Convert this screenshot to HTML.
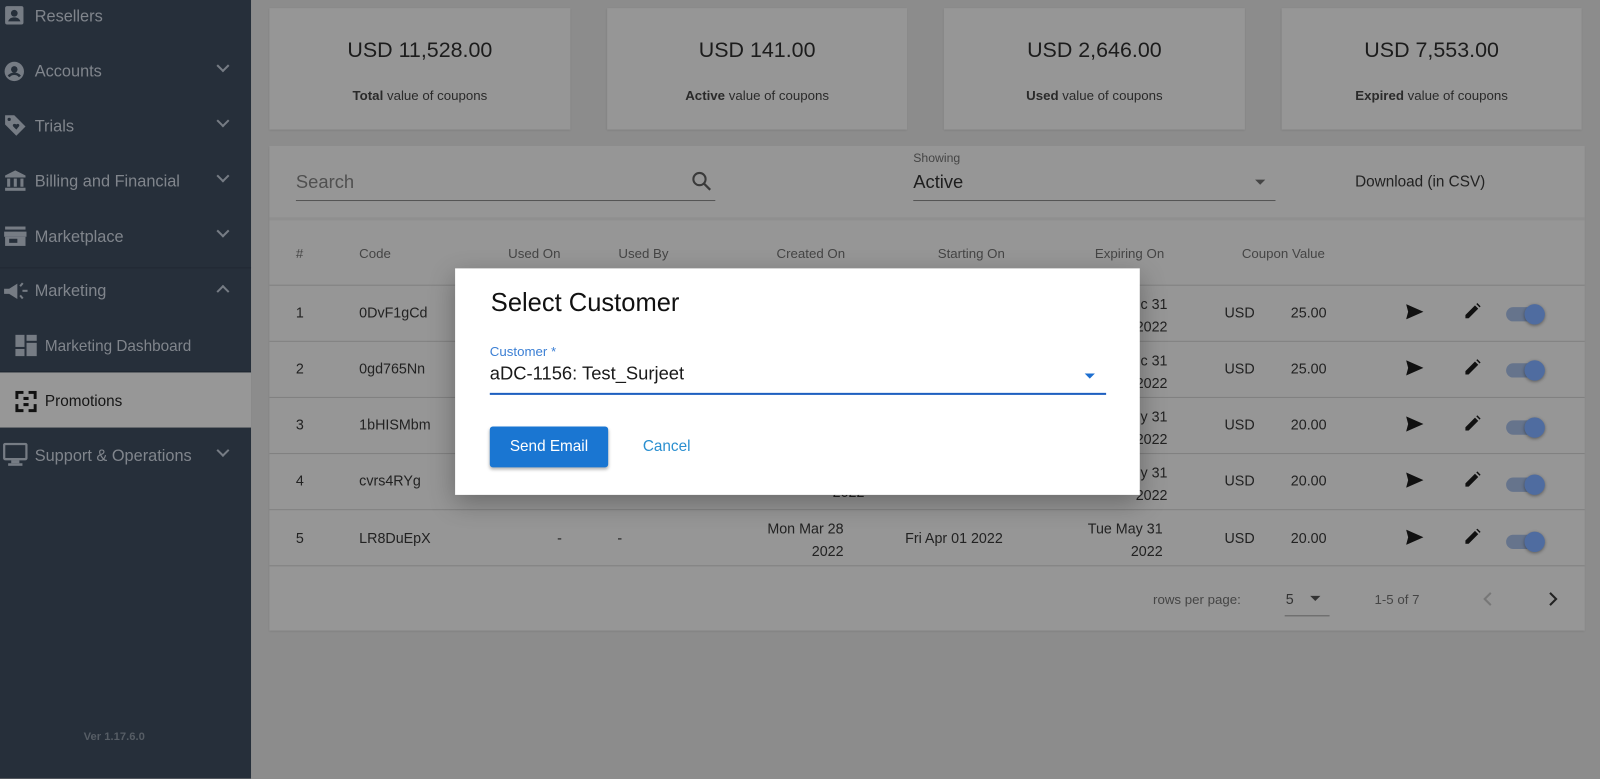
<!DOCTYPE html>
<html><head><meta charset="utf-8"><style>
*{box-sizing:border-box;margin:0;padding:0}
html,body{width:1600px;height:763px;overflow:hidden;background:#8c8c8c}
#w{position:absolute;left:0;top:0;width:1568px;height:748px;transform:scale(1.0204);transform-origin:0 0;font-family:"Liberation Sans",sans-serif}
.a{position:absolute;white-space:nowrap}
#sb{position:absolute;left:0;top:0;width:246px;height:763px;background:#262f3a}
.mi{position:absolute;left:34px;font-size:16px;color:#80858c}
.chev{position:absolute;left:214px;width:9px;height:9px;border-right:2px solid #767c84;border-bottom:2px solid #767c84;transform:rotate(45deg)}
.card{position:absolute;background:#969696;box-shadow:0 1px 2px rgba(0,0,0,.15)}
.big{position:absolute;width:100%;text-align:center;top:30px;font-size:21px;color:#1c1c1c}
.sm{position:absolute;width:100%;text-align:center;top:78px;font-size:13px;color:#2a2a2a}
.th{position:absolute;top:241px;font-size:13px;color:#454545}
.td{position:absolute;font-size:14px;color:#222}
.line{position:absolute;left:264px;width:1289px;height:1px;background:#808080}
.tg{position:absolute;width:34px;height:14px;border-radius:7px;background:#66748c}
.tg i{position:absolute;right:-4px;top:-3px;width:20px;height:20px;border-radius:50%;background:#4f6ca0;box-shadow:0 1px 3px rgba(0,0,0,.4)}
</style></head><body><div id="w">
<div id="sb">
<svg class="a" style="left:4px;top:5px" width="20" height="20" viewBox="0 0 20 20"><rect x="1" y="1" width="18" height="18" rx="2" fill="#767c84"/><circle cx="10" cy="8" r="3.3" fill="#262f3a"/><path d="M4 16c1-3 3-4 6-4s5 1 6 4z" fill="#262f3a"/></svg>
<div class="mi" style="top:8px">Resellers</div>
<svg class="a" style="left:4px;top:60px" width="20" height="20"><circle cx="10" cy="10" r="9.5" fill="#767c84"/><circle cx="10" cy="8" r="3.2" fill="#262f3a"/><path d="M4.5 15c1.5-2 3.5-2.7 5.5-2.7s4 .7 5.5 2.7" stroke="#262f3a" stroke-width="2.5" fill="none"/></svg>
<div class="mi" style="top:62px">Accounts</div><div class="chev" style="top:60px"></div>
<svg class="a" style="left:3px;top:111px" width="24" height="24"><path d="M2 2h9l11 11-9 9L2 11z" fill="#767c84"/><circle cx="6" cy="6" r="1.6" fill="#262f3a"/><path d="M13 11c1.5-1.5 4 0 2.5 2L13 16l-3-3c-1.5-2 1-3.5 3-2z" fill="#262f3a"/></svg>
<div class="mi" style="top:116px">Trials</div><div class="chev" style="top:114px"></div>
<svg class="a" style="left:4px;top:166px" width="22" height="24"><path d="M11 1L1 6v2h20V6z" fill="#767c84"/><rect x="3" y="9" width="3" height="8" fill="#767c84"/><rect x="9.5" y="9" width="3" height="8" fill="#767c84"/><rect x="16" y="9" width="3" height="8" fill="#767c84"/><rect x="1" y="18" width="20" height="3" fill="#767c84"/></svg>
<div class="mi" style="top:170px">Billing and Financial</div><div class="chev" style="top:168px"></div>
<svg class="a" style="left:4px;top:222px" width="22" height="20"><rect x="1" y="0" width="20" height="3" fill="#767c84"/><path d="M0 5h22v5H0z" fill="#767c84"/><rect x="1" y="10" width="20" height="9" fill="#767c84"/><rect x="5" y="12" width="8" height="4" fill="#262f3a"/></svg>
<div class="mi" style="top:224px">Marketplace</div><div class="chev" style="top:222px"></div>
<div class="a" style="left:0;top:262px;width:246px;height:1px;background:#212933"></div>
<svg class="a" style="left:3px;top:275px" width="26" height="22"><path d="M1 8h5l8-5v15l-8-5H1z" fill="#767c84"/><rect x="19" y="9" width="5" height="2" fill="#767c84"/><rect x="17" y="2" width="2" height="4" transform="rotate(40 18 4)" fill="#767c84"/><rect x="17" y="14" width="2" height="4" transform="rotate(-40 18 16)" fill="#767c84"/></svg>
<div class="mi" style="top:277px">Marketing</div>
<div class="chev" style="top:281px;transform:rotate(225deg)"></div>
<svg class="a" style="left:15px;top:328px" width="22" height="22"><rect x="0" y="0" width="9" height="12" fill="#767c84"/><rect x="11" y="0" width="10" height="6" fill="#767c84"/><rect x="11" y="8" width="10" height="13" fill="#767c84"/><rect x="0" y="14" width="9" height="7" fill="#767c84"/></svg>
<div class="mi" style="left:44px;top:331px;font-size:15px">Marketing Dashboard</div>
<div class="a" style="left:0;top:364px;width:246px;height:1px;background:#1c242d"></div>
<div class="a" style="left:0;top:365px;width:246px;height:54px;background:#979797"></div>
<svg class="a" style="left:15px;top:383px" width="21" height="21"><g fill="#111"><path d="M0 0h8v3H3v5H0zM21 0h-8v3h5v5h3zM0 21h8v-3H3v-5H0zM21 21h-8v-3h5v-5h3z"/><rect x="8" y="6" width="5" height="3"/><rect x="8" y="12" width="5" height="3"/></g></svg>
<div class="mi" style="left:44px;top:385px;font-size:15px;color:#151515">Promotions</div>
<svg class="a" style="left:3px;top:434px" width="24" height="24"><rect x="1" y="1" width="22" height="15" rx="1.5" fill="none" stroke="#767c84" stroke-width="2.4"/><rect x="8" y="17" width="8" height="3" fill="#767c84"/><rect x="5" y="20" width="14" height="2.5" fill="#767c84"/></svg>
<div class="mi" style="top:439px">Support &amp; Operations</div><div class="chev" style="top:437px"></div>
<div class="a" style="left:82px;top:716px;font-size:11px;font-weight:bold;color:#565d65">Ver 1.17.6.0</div>
</div>

<div class="card" style="left:264px;top:8px;width:295px;height:119px"><div class="big">USD 11,528.00</div><div class="sm"><b>Total</b> value of coupons</div></div>
<div class="card" style="left:595px;top:8px;width:294px;height:119px"><div class="big">USD 141.00</div><div class="sm"><b>Active</b> value of coupons</div></div>
<div class="card" style="left:925px;top:8px;width:295px;height:119px"><div class="big">USD 2,646.00</div><div class="sm"><b>Used</b> value of coupons</div></div>
<div class="card" style="left:1256px;top:8px;width:294px;height:119px"><div class="big">USD 7,553.00</div><div class="sm"><b>Expired</b> value of coupons</div></div>

<div class="card" style="left:264px;top:143px;width:1289px;height:475px"></div>
<div class="a" style="left:264px;top:213px;width:1289px;height:3px;background:#8f8f8f"></div>
<div class="a" style="left:290px;top:168px;font-size:18px;color:#505050">Search</div>
<svg class="a" style="left:677px;top:167px" width="22" height="22"><circle cx="8.5" cy="8.5" r="6" fill="none" stroke="#3a3a3a" stroke-width="2"/><path d="M13 13l6 6" stroke="#3a3a3a" stroke-width="2.2"/></svg>
<div class="a" style="left:290px;top:196px;width:411px;height:1px;background:#555"></div>
<div class="a" style="left:895px;top:148px;font-size:12px;color:#454545">Showing</div>
<div class="a" style="left:895px;top:168px;font-size:18px;color:#1e1e1e">Active</div>
<div class="a" style="left:1230px;top:176px;border-left:5px solid transparent;border-right:5px solid transparent;border-top:5px solid #454545"></div>
<div class="a" style="left:895px;top:196px;width:355px;height:1px;background:#555"></div>
<div class="a" style="left:1328px;top:170px;font-size:15px;color:#222">Download (in CSV)</div>

<div class="th" style="left:290px">#</div>
<div class="th" style="left:352px">Code</div>
<div class="th" style="left:498px">Used On</div>
<div class="th" style="left:606px">Used By</div>
<div class="th" style="left:761px">Created On</div>
<div class="th" style="left:919px">Starting On</div>
<div class="th" style="left:1073px">Expiring On</div>
<div class="th" style="left:1217px">Coupon Value</div>

<div class="line" style="top:279px"></div><div class="line" style="top:334px"></div><div class="line" style="top:389px"></div><div class="line" style="top:444px"></div><div class="line" style="top:499px"></div><div class="line" style="top:554px"></div>

<div class="td" style="left:290px;top:298px">1</div><div class="td" style="left:352px;top:298px">0DvF1gCd</div>
<div class="td" style="left:290px;top:353px">2</div><div class="td" style="left:352px;top:353px">0gd765Nn</div>
<div class="td" style="left:290px;top:408px">3</div><div class="td" style="left:352px;top:408px">1bHISMbm</div>
<div class="td" style="left:290px;top:463px">4</div><div class="td" style="left:352px;top:463px">cvrs4RYg</div>
<div class="td" style="left:290px;top:519px">5</div><div class="td" style="left:352px;top:519px">LR8DuEpX</div>
<div class="td" style="left:546px;top:519px">-</div><div class="td" style="left:605px;top:519px">-</div>
<div class="td" style="left:752px;top:507px;text-align:right;line-height:22px">Mon Mar 28<br>&nbsp;&nbsp;&nbsp;&nbsp;&nbsp;&nbsp;2022</div>
<div class="td" style="left:816px;top:474px">2022</div>
<div class="td" style="left:887px;top:519px">Fri Apr 01 2022</div>
<div class="td" style="left:1066px;top:507px;line-height:22px;text-align:right">Tue May 31<br>2022</div>

<div class="td" style="left:1113px;top:287px;line-height:22px;text-align:right">c 31<br>2022</div>
<div class="td" style="left:1113px;top:342px;line-height:22px;text-align:right">c 31<br>2022</div>
<div class="td" style="left:1113px;top:397px;line-height:22px;text-align:right">y 31<br>2022</div>
<div class="td" style="left:1113px;top:452px;line-height:22px;text-align:right">y 31<br>2022</div>

<div class="td" style="left:1200px;top:298px">USD</div><div class="td" style="left:1265px;top:298px">25.00</div>
<div class="td" style="left:1200px;top:353px">USD</div><div class="td" style="left:1265px;top:353px">25.00</div>
<div class="td" style="left:1200px;top:408px">USD</div><div class="td" style="left:1265px;top:408px">20.00</div>
<div class="td" style="left:1200px;top:463px">USD</div><div class="td" style="left:1265px;top:463px">20.00</div>
<div class="td" style="left:1200px;top:519px">USD</div><div class="td" style="left:1265px;top:519px">20.00</div>

<svg class="a" style="left:1378px;top:298px" width="17" height="15"><path d="M0 0l17 7.5L0 15l2-7.5z" fill="#111"/></svg>
<svg class="a" style="left:1378px;top:353px" width="17" height="15"><path d="M0 0l17 7.5L0 15l2-7.5z" fill="#111"/></svg>
<svg class="a" style="left:1378px;top:408px" width="17" height="15"><path d="M0 0l17 7.5L0 15l2-7.5z" fill="#111"/></svg>
<svg class="a" style="left:1378px;top:463px" width="17" height="15"><path d="M0 0l17 7.5L0 15l2-7.5z" fill="#111"/></svg>
<svg class="a" style="left:1378px;top:519px" width="17" height="15"><path d="M0 0l17 7.5L0 15l2-7.5z" fill="#111"/></svg>

<svg class="a" style="left:1436px;top:297px" width="15" height="15"><path d="M0 15v-3.2L9.5 2.3l3.2 3.2L3.2 15zM10.8 1l1-1 3.2 3.2-1 1z" fill="#111"/></svg>
<svg class="a" style="left:1436px;top:352px" width="15" height="15"><path d="M0 15v-3.2L9.5 2.3l3.2 3.2L3.2 15zM10.8 1l1-1 3.2 3.2-1 1z" fill="#111"/></svg>
<svg class="a" style="left:1436px;top:407px" width="15" height="15"><path d="M0 15v-3.2L9.5 2.3l3.2 3.2L3.2 15zM10.8 1l1-1 3.2 3.2-1 1z" fill="#111"/></svg>
<svg class="a" style="left:1436px;top:462px" width="15" height="15"><path d="M0 15v-3.2L9.5 2.3l3.2 3.2L3.2 15zM10.8 1l1-1 3.2 3.2-1 1z" fill="#111"/></svg>
<svg class="a" style="left:1436px;top:518px" width="15" height="15"><path d="M0 15v-3.2L9.5 2.3l3.2 3.2L3.2 15zM10.8 1l1-1 3.2 3.2-1 1z" fill="#111"/></svg>

<div class="tg" style="left:1476px;top:301px"><i></i></div>
<div class="tg" style="left:1476px;top:356px"><i></i></div>
<div class="tg" style="left:1476px;top:412px"><i></i></div>
<div class="tg" style="left:1476px;top:468px"><i></i></div>
<div class="tg" style="left:1476px;top:524px"><i></i></div>

<div class="a" style="left:1130px;top:580px;font-size:13px;color:#454545">rows per page:</div>
<div class="a" style="left:1260px;top:579px;font-size:14px;color:#333">5</div>
<div class="a" style="left:1284px;top:584px;border-left:5px solid transparent;border-right:5px solid transparent;border-top:5px solid #333"></div>
<div class="a" style="left:1259px;top:603px;width:44px;height:1px;background:#606060"></div>
<div class="a" style="left:1347px;top:580px;font-size:13px;color:#454545">1-5 of 7</div>
<svg class="a" style="left:1453px;top:579px" width="10" height="16"><path d="M8 2L2 8l6 6" stroke="#777" stroke-width="2" fill="none"/></svg>
<svg class="a" style="left:1517px;top:579px" width="10" height="16"><path d="M2 2l6 6-6 6" stroke="#222" stroke-width="2" fill="none"/></svg>

<div class="a" style="left:446px;top:263px;width:671px;height:222px;background:#fff;box-shadow:0 8px 24px rgba(0,0,0,.3)">
<div class="a" style="left:35px;top:20px;font-size:25px;color:#111">Select Customer</div>
<div class="a" style="left:34px;top:74px;font-size:13px;color:#3b7fd4">Customer *</div>
<div class="a" style="left:34px;top:93px;font-size:18px;color:#1a1a1a">aDC-1156: Test_Surjeet</div>
<div class="a" style="left:617px;top:103px;border-left:5px solid transparent;border-right:5px solid transparent;border-top:5px solid #1e6fd0"></div>
<div class="a" style="left:34px;top:122px;width:604px;height:2px;background:#1e5fc0"></div>
<div class="a" style="left:34px;top:155px;width:116px;height:40px;background:#1a76d2;border-radius:3px;box-shadow:0 2px 3px rgba(0,0,0,.3);color:#fff;font-size:15px;text-align:center;line-height:40px">Send Email</div>
<div class="a" style="left:184px;top:166px;font-size:15px;color:#2a8fd0">Cancel</div>
</div>
</div></body></html>
